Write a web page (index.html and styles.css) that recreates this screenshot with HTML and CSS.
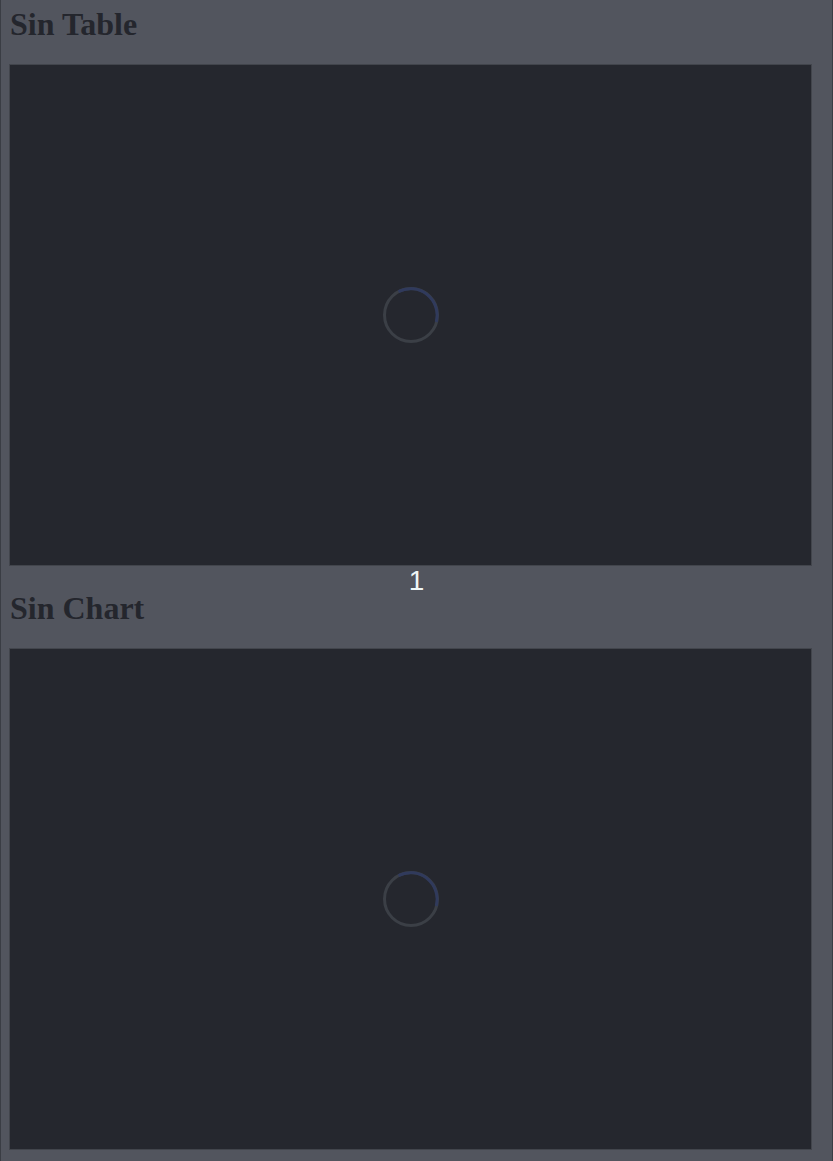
FILE: index.html
```html
<!DOCTYPE html>
<html>
<head>
<meta charset="utf-8">
<link rel="stylesheet" href="styles.css">
</head>
<body>
<div class="page">
  <section class="panel">
    <h1 class="title">Sin Table</h1>
    <div class="box">
      <svg class="spinner" width="58" height="58" viewBox="0 0 58 58">
        <circle cx="29" cy="29" r="26.5" fill="none" stroke="#3b3f46" stroke-width="3"/>
        <path d="M16.5 5.6 A26.5 26.5 0 0 1 54.2 36" fill="none" stroke="#303a5c" stroke-width="3"/>
      </svg>
    </div>
  </section>
  <div class="counter">1</div>
  <section class="panel">
    <h1 class="title">Sin Chart</h1>
    <div class="box">
      <svg class="spinner" width="58" height="58" viewBox="0 0 58 58">
        <circle cx="29" cy="29" r="26.5" fill="none" stroke="#3b3f46" stroke-width="3"/>
        <path d="M16.5 5.6 A26.5 26.5 0 0 1 54.2 36" fill="none" stroke="#303a5c" stroke-width="3"/>
      </svg>
    </div>
  </section>
</div>
</body>
</html>
```

FILE: styles.css
```css
html, body {
  margin: 0;
  padding: 0;
  background: #52555e;
}
.page {
  min-height: 1161px;
  box-sizing: border-box;
  border-left: 1px solid #3a3d44;
  border-right: 1px solid #3a3d44;
  padding: 0 20px 0 8px;
}
.panel {
  display: flex;
  flex-direction: column;
}
.title {
  margin: 0;
  padding: 1px 0 0 1px;
  font-family: "Liberation Serif", serif;
  font-weight: bold;
  font-size: 32px;
  line-height: 47px;
  color: #24262d;
}
.box {
  margin-top: 16px;
  height: 500px;
  background: #25272e;
  border: 1px solid #42454c;
  display: flex;
  align-items: center;
  justify-content: center;
}
.counter {
  font-family: "Liberation Sans", sans-serif;
  font-size: 28px;
  line-height: 30px;
  color: #eef6f6;
  text-align: center;
  margin: 0 -20px 0 -8px;
  height: 18px;
}
```
